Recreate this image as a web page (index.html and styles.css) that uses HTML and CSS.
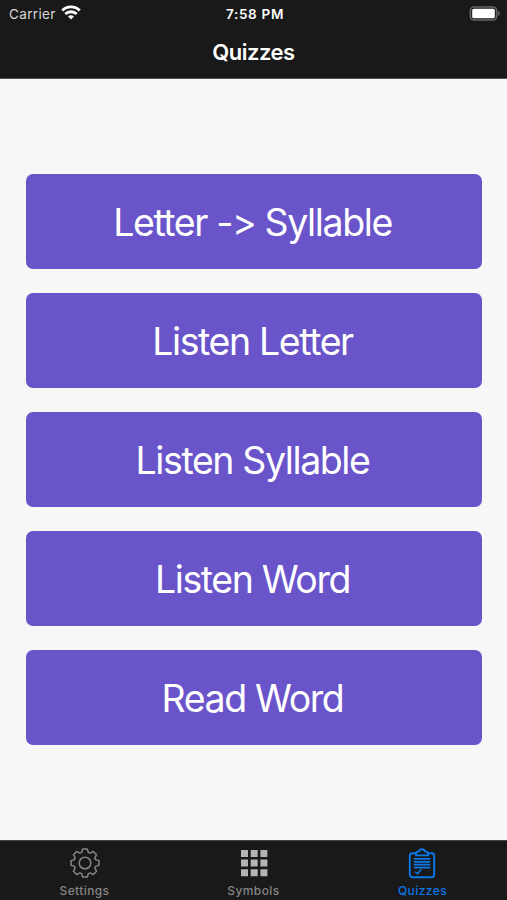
FILE: index.html
```html
<!DOCTYPE html>
<html lang="en">
<head>
<meta charset="UTF-8">
<meta name="viewport" content="width=device-width, initial-scale=1.0">
<title>Quizzes</title>
<link rel="stylesheet" href="styles.css">
</head>
<body>
    <header class="top-bar">
        <div class="status">
            <div class="carrier">
                <span>Carrier</span>
                <svg width="20" height="15" viewBox="0 0 20 15" fill="none" stroke="#fff" stroke-width="2.9">
                    <path d="M1.3 5.5a12.3 12.3 0 0 1 17.4 0"/>
                    <path d="M4.3 9.1a8 8 0 0 1 11.4 0"/>
                    <path d="M10 14.6l-3-3.1a4.2 4.2 0 0 1 6 0z" fill="#fff" stroke="none"/>
                </svg>
            </div>
            <span class="time">7:58 PM</span>
            <svg class="battery" width="32" height="15" viewBox="0 0 32 15">
                <rect x="1.4" y="0.9" width="26.2" height="13.2" rx="3.6" fill="none" stroke="#666" stroke-width="1.5"/>
                <rect x="3.2" y="2.8" width="22.6" height="9.4" rx="1.5" fill="#fff"/>
                <path d="M29 5.1c2.4.8 2.4 4 0 4.8z" fill="#666"/>
            </svg>
        </div>
        <h1>Quizzes</h1>
    </header>

    <main class="quiz-list">
        <button class="quiz">Letter -&gt; Syllable</button>
        <button class="quiz">Listen Letter</button>
        <button class="quiz">Listen Syllable</button>
        <button class="quiz">Listen Word</button>
        <button class="quiz">Read Word</button>
    </main>

    <nav class="tabs">
        <a class="tab">
            <svg width="32" height="32" viewBox="-16 -16 32 32" fill="none" stroke="currentColor" stroke-width="1.5" stroke-linejoin="round">
                <path d="M-3.4 -10.6L-2.3 -14H2.3L3.4 -10.6L5.09 -9.9L8.27 -11.53L11.53 -8.27L9.9 -5.09L10.6 -3.4L14 -2.3V2.3L10.6 3.4L9.9 5.09L11.53 8.27L8.27 11.53L5.09 9.9L3.4 10.6L2.3 14H-2.3L-3.4 10.6L-5.09 9.9L-8.27 11.53L-11.53 8.27L-9.9 5.09L-10.6 3.4L-14 2.3V-2.3L-10.6 -3.4L-9.9 -5.09L-11.53 -8.27L-8.27 -11.53L-5.09 -9.9Z"/>
                <circle r="5.8"/>
            </svg>
            <span>Settings</span>
        </a>
        <a class="tab">
            <svg width="32" height="32" viewBox="0 0 32 32" fill="currentColor">
                <path d="M3 3h7v7H3zM12.7 3h7v7h-7zM22.4 3h7v7h-7zM3 12.6h7v7H3zM12.7 12.6h7v7h-7zM22.4 12.6h7v7h-7zM3 22.2h7v7H3zM12.7 22.2h7v7h-7zM22.4 22.2h7v7h-7z"/>
            </svg>
            <span>Symbols</span>
        </a>
        <a class="tab active">
            <svg width="32" height="32" viewBox="0 0 32 32" fill="none" stroke="currentColor" stroke-width="1.9" stroke-linecap="round" stroke-linejoin="round">
                <path d="M10 6.3H6.3a2.5 2.5 0 0 0-2.5 2.5v18.9a2.5 2.5 0 0 0 2.5 2.5h19.4a2.5 2.5 0 0 0 2.5-2.5V8.8a2.5 2.5 0 0 0-2.5-2.5H22"/>
                <path d="M10 8.4V6.6a2 2 0 0 1 2-2h.9a3.2 3.2 0 0 1 6.2 0h.9a2 2 0 0 1 2 2v1.8z"/>
                <path d="M8.5 11.9h15M8.5 14.8h15M8.5 17.7h15M8.5 20.6h15" stroke-width="1.8"/>
                <path d="M9.5 25l2 1.8 3.5-4" stroke-width="1.5"/>
            </svg>
            <span>Quizzes</span>
        </a>
    </nav>
</body>
</html>
```

FILE: styles.css
```css
* {
    box-sizing: border-box;
}

body {
    margin: 0;
    height: 100vh;
    display: flex;
    flex-direction: column;
    font-family: Inter, "Liberation Sans", sans-serif;
    background-color: #f7f7f7;
}

.top-bar {
    height: 79px;
    background-color: #191919;
    border-bottom: 1px solid #555;
    color: #fff;
}

.status {
    display: grid;
    grid-template-columns: 1fr auto 1fr;
    align-items: center;
    height: 27px;
    padding: 0 6px 0 9px;
    font-size: 13.5px;
}

.carrier {
    display: flex;
    align-items: center;
    gap: 5px;
    color: #d8d8d8;
    letter-spacing: 0.35px;
}

.carrier svg {
    margin-top: -2px;
}

.time {
    font-weight: 600;
    font-size: 13.5px;
    letter-spacing: 0.7px;
}

.battery {
    justify-self: end;
}

h1 {
    margin: 11px 0 0;
    font-size: 22px;
    font-weight: 600;
    line-height: 28px;
    letter-spacing: -0.5px;
    text-align: center;
}

.quiz-list {
    flex: 1;
    display: flex;
    flex-direction: column;
    justify-content: center;
    gap: 24px;
    padding: 0 25px 0 26px;
}

.quiz {
    height: 95px;
    padding: 1px 3px 0 0;
    border: none;
    border-radius: 7px;
    background-color: #6a54ca;
    color: #fff;
    font-family: inherit;
    font-size: 37.5px;
    font-weight: 400;
    letter-spacing: -1.4px;
    /* keep "->" as two characters */
    font-feature-settings: "calt" 0;
    cursor: pointer;
}

.tabs {
    display: grid;
    grid-template-columns: repeat(3, 1fr);
    height: 60px;
    background-color: #191919;
    border-top: 1px solid #444;
}

.tab {
    display: flex;
    flex-direction: column;
    align-items: center;
    padding-top: 6px;
    color: #858585;
    font-size: 12px;
    font-weight: 500;
    line-height: 16px;
    letter-spacing: 0.4px;
}

.tab span {
    margin-top: 4px;
}

.tab:nth-child(2) svg {
    color: #b4b4b4;
}

.tab.active {
    color: #0a78e8;
}

.tab.active svg {
    margin-left: -1px;
}
```
